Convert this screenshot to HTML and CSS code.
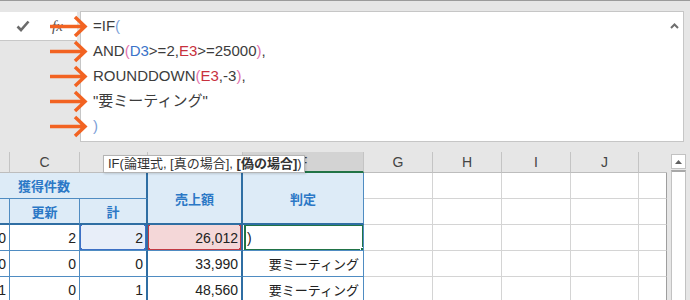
FILE: index.html
```html
<!DOCTYPE html>
<html lang="ja">

<head>
    <meta charset="UTF-8">
    <meta name="viewport" content="width=device-width, initial-scale=1.0">
    <title>IF関数の入力</title>
    <link rel="stylesheet" href="styles.css">
</head>

<body>
    <div class="app">
        <div class="formula-row">
            <div class="fb-tools">
                <svg class="tick" width="14" height="12" viewBox="0 0 14 12">
                    <path d="M1.5 6.5 L5 10 L12.5 1.5" fill="none" stroke="#6b6b6b" stroke-width="2.6" />
                </svg>
                <span class="fx">fx</span>
            </div>
            <div class="fb-input">
                <div class="line">=IF<span class="p1">(</span></div>
                <div class="line">AND<span class="p2">(</span><span class="r1">D3</span>&gt;=2,<span class="r2">E3</span>&gt;=25000<span class="p2">)</span>,</div>
                <div class="line">ROUNDDOWN<span class="p2">(</span><span class="r2">E3</span>,-3<span class="p2">)</span>,</div>
                <div class="line">"要ミーティング"</div>
                <div class="line"><span class="p1">)</span></div>
                <svg class="collapse" width="9" height="6" viewBox="0 0 9 6">
                    <path d="M1 5 L4.5 1.5 L8 5" fill="none" stroke="#6e6e6e" stroke-width="2" />
                </svg>
            </div>
        </div>

        <!-- orange arrows drawn over the formula bar -->
        <svg class="arrows" width="120" height="140" viewBox="0 0 120 140">
            <g fill="none" stroke="#f26322" stroke-width="3.5">
                <path d="M50 25.5 H84 M75 16 L85 25.5 L75 35" />
                <path d="M50 50.5 H84 M75 41 L85 50.5 L75 60" />
                <path d="M50 75.5 H84 M75 66 L85 75.5 L75 85" />
                <path d="M50 100.5 H84 M75 91 L85 100.5 L75 110" />
                <path d="M50 125.5 H84 M75 116 L85 125.5 L75 135" />
            </g>
        </svg>

        <div class="sheet">
            <div class="grid">
                <div class="ch"></div>
                <div class="ch">C</div>
                <div class="ch">D</div>
                <div class="ch">E</div>
                <div class="ch active">F</div>
                <div class="ch">G</div>
                <div class="ch">H</div>
                <div class="ch">I</div>
                <div class="ch">J</div>
                <div class="ch last"></div>

                <div class="hd merged thick">獲得件数</div>
                <div class="hd tall thick">売上額</div>
                <div class="hd tall">判定</div>
                <div class="c"></div><div class="c"></div><div class="c"></div><div class="c"></div><div class="c last"></div>

                <div class="hd low"></div>
                <div class="hd low">更新</div>
                <div class="hd low thick">計</div>
                <div class="c"></div><div class="c"></div><div class="c"></div><div class="c"></div><div class="c last"></div>

                <div class="td num">0</div>
                <div class="td num">2</div>
                <div class="td num thick pick-blue">2
                    <span class="frame blue"><i></i><i></i><i></i><i></i></span>
                </div>
                <div class="td num thick pick-red">26,012
                    <span class="frame red"><i></i><i></i><i></i><i></i></span>
                </div>
                <div class="td edit">)
                    <span class="frame green"><i></i></span>
                </div>
                <div class="c"></div><div class="c"></div><div class="c"></div><div class="c"></div><div class="c last"></div>

                <div class="td num">0</div>
                <div class="td num">0</div>
                <div class="td num thick">0</div>
                <div class="td num thick">33,990</div>
                <div class="td num jp">要ミーティング</div>
                <div class="c"></div><div class="c"></div><div class="c"></div><div class="c"></div><div class="c last"></div>

                <div class="td num">1</div>
                <div class="td num">0</div>
                <div class="td num thick">1</div>
                <div class="td num thick">48,560</div>
                <div class="td num jp">要ミーティング</div>
                <div class="c"></div><div class="c"></div><div class="c"></div><div class="c"></div><div class="c last"></div>
            </div>
            <div class="vscroll">
                <div class="up">
                    <svg width="7" height="4" viewBox="0 0 7 4"><path d="M0 4 L3.5 0 L7 4 Z" fill="#606060" /></svg>
                </div>
                <div class="thumb"></div>
            </div>
        </div>

        <div class="tooltip">IF(論理式, [真の場合], <b>[偽の場合]</b>)</div>
    </div>
</body>

</html>
```

FILE: styles.css
```css
body {
    margin: 0;
    padding: 0;
    width: 690px;
    height: 300px;
    overflow: hidden;
    background-color: #e6e6e6;
    font-family: "Liberation Sans", "Noto Sans CJK JP", sans-serif;
    color: #222;
}

.app {
    position: relative;
    height: 300px;
    box-sizing: border-box;
    border-top: 1px solid #9b9b9b;
}

/* formula bar */

.formula-row {
    display: flex;
    align-items: flex-start;
    padding-top: 10px;
}

.fb-tools {
    width: 77px;
    height: 28px;
    margin-top: 1px;
    margin-right: 3px;
    background-color: #ffffff;
    border-bottom: 1px solid #c8c8c8;
    display: flex;
    align-items: center;
}

.tick {
    margin-left: 16px;
}

.fx {
    margin-left: 22px;
    font-family: "Liberation Serif", serif;
    font-style: italic;
    font-size: 15px;
    color: #555;
}

.fb-input {
    position: relative;
    flex: 1;
    height: 131px;
    box-sizing: border-box;
    margin-right: 6px;
    padding: 1px 0 0 12px;
    background-color: #ffffff;
    border: 1px solid #c6c6c6;
    font-size: 15px;
    line-height: 25px;
    color: #3c3c3c;
}

.p1 { color: #7c9fd8; }
.p2 { color: #e273ad; }
.r1 { color: #3b73c9; }
.r2 { color: #c8313e; }

.collapse {
    position: absolute;
    top: 11px;
    right: 4px;
}

.arrows {
    position: absolute;
    top: 0;
    left: 0;
}

/* sheet */

.sheet {
    display: flex;
    margin-top: 10px;
}

.grid {
    display: grid;
    grid-template-columns: 10px 70px 68px 95px 121px 69px 69px 69px 68px 28px;
    grid-template-rows: 21px 26px 26px 26px 26px 26px;
    background-color: #ffffff;
}

.grid > div {
    box-sizing: border-box;
    display: flex;
    align-items: center;
    overflow: hidden;
    white-space: nowrap;
}

.ch {
    justify-content: center;
    background-color: #e6e6e6;
    border-right: 1px solid #c4c4c4;
    border-bottom: 1px solid #bdbdbd;
    font-size: 14px;
    color: #444;
}

.ch.active {
    background-color: #d3d3d3;
    border-bottom: 2px solid #217346;
}

.ch.last {
    border-right: none;
}

.c {
    border-right: 1px solid #d4d4d4;
    border-bottom: 1px solid #d4d4d4;
}

.c.last {
    border-right: 1px solid #9e9e9e;
}

.hd {
    justify-content: center;
    background-color: #ddebf7;
    border-right: 1px solid #4f8cc2;
    border-bottom: 1px solid #4f8cc2;
    font-family: "Noto Sans CJK JP", sans-serif;
    font-size: 13px;
    font-weight: bold;
    color: #2b78c6;
}

.hd.merged {
    grid-column: span 3;
    padding-right: 58px;
}

.hd.tall {
    grid-row: span 2;
    border-bottom: 2px solid #2f6ea3;
}

.hd.low {
    border-bottom: 2px solid #2f6ea3;
}

.grid > .thick {
    border-right: 2px solid #2f6ea3;
}

.td {
    position: relative;
    overflow: visible;
    border-right: 1px solid #4f8cc2;
    border-bottom: 1px solid #4f8cc2;
    font-size: 14px;
}

.grid > .num {
    justify-content: flex-end;
    padding-right: 3px;
}

.grid > .td:first-child,
.td.num:nth-child(10n + 1) {
    overflow: hidden;
}

.td.jp {
    font-family: "Noto Sans CJK JP", sans-serif;
    font-size: 13px;
    padding-right: 4px;
}

.td.edit {
    padding-left: 4px;
}

.pick-blue {
    background-color: #e8eef9;
}

.pick-red {
    background-color: #f4d7d8;
}

/* selection frames and their handles */

.frame {
    position: absolute;
    border: 2px solid;
    pointer-events: none;
}

.frame i {
    position: absolute;
    width: 5px;
    height: 5px;
    background-color: currentColor;
}

.frame i:nth-child(1) { left: -4px; top: -4px; }
.frame i:nth-child(2) { right: -4px; top: -4px; }
.frame i:nth-child(3) { left: -4px; bottom: -4px; }
.frame i:nth-child(4) { right: -4px; bottom: -4px; }

.frame.blue {
    top: -2px;
    left: -1px;
    right: -1px;
    bottom: -1px;
    color: #3d6fc5;
}

.frame.red {
    top: -2px;
    left: -1px;
    right: -1px;
    bottom: -1px;
    color: #c23a43;
}

.frame.green {
    top: -1px;
    left: 1px;
    right: -1px;
    bottom: -1px;
    color: #217346;
}

.frame.green i {
    right: -4px;
    bottom: -4px;
    left: auto;
    top: auto;
    width: 4px;
    height: 4px;
    border: 1px solid #ffffff;
}

/* scrollbar */

.vscroll {
    width: 15px;
    margin-left: 4px;
    margin-top: 2px;
    display: flex;
    flex-direction: column;
}

.up {
    height: 15px;
    box-sizing: border-box;
    background-color: #ffffff;
    border: 1px solid #c2c2c2;
    display: flex;
    align-items: center;
    justify-content: center;
}

.thumb {
    flex: 1;
    background-color: #ffffff;
    border: 1px solid #c2c2c2;
    border-top: 2px solid #a8a8a8;
    margin-top: 1px;
}

/* function argument tip */

.tooltip {
    position: absolute;
    top: 154px;
    left: 103px;
    width: 202px;
    height: 18px;
    box-sizing: border-box;
    padding: 0 4px;
    background-color: #ffffff;
    border: 1px solid #b4b4b4;
    box-shadow: 1px 1px 2px rgba(0, 0, 0, 0.15);
    font-size: 13px;
    line-height: 16px;
    color: #333;
    white-space: nowrap;
}
```
